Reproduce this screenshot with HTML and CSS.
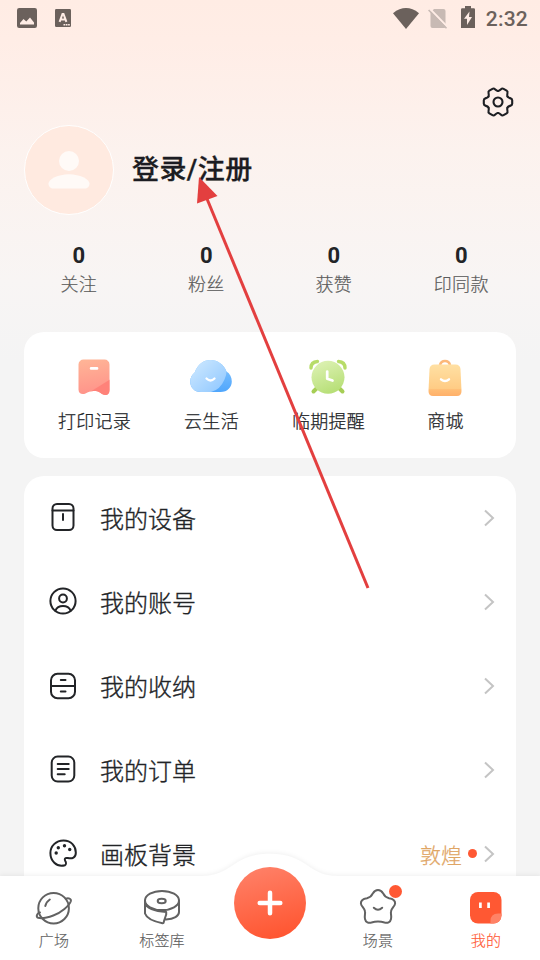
FILE: index.html
```html
<!DOCTYPE html>
<html lang="zh-CN">
<head>
<meta charset="utf-8">
<title>我的</title>
<link rel="stylesheet" href="styles.css">
</head>
<body>
<div class="screen">
  <header class="status">
    <svg class="s-photo" width="20" height="20" viewBox="0 0 20 20"><rect width="20" height="20" rx="2.2" fill="#6b615c"/><path d="M3 16.5V15l3.5-4 2.8 2.6L13 9.5l4 5v2z" fill="#ffede6"/></svg>
    <svg class="s-lang" width="16" height="18" viewBox="0 0 16 18"><rect width="16" height="18" rx="1.2" fill="#6b615c"/><path d="M4.600 12.800 7.500 5h1l2.900 7.800M5.800 10.500h4.400" fill="none" stroke="#ffede6" stroke-width="2"/><path d="M8.500 15.800h1.700m.6 0h1.700m.6 0h1.700" stroke="#ffede6" stroke-width="1.500"/></svg>
    <span class="grow"></span>
    <svg class="s-wifi" width="26" height="21" viewBox="0 0 26 21"><path d="M0 5.2Q13-5 26 5.2L13 21z" fill="#6b615c"/></svg>
    <svg class="s-sim" width="20" height="21" viewBox="0 0 20 21"><path d="M2.500 4.500 6 1h9.500a2 2 0 0 1 2 2v15.500a1.500 1.500 0 0 1-1.500 1.500H4.500a2 2 0 0 1-2-2z" fill="#c8bab4"/><path d="M2 1 19.500 19" stroke="#ffede6" stroke-width="2"/><path d="M.6 2 18.500 20.300" stroke="#c8bab4" stroke-width="1.600"/></svg>
    <svg class="s-batt" width="14" height="22" viewBox="0 0 14 22"><path d="M0 3.500Q0 2.200 1.200 2.200H4V0h6v2.200h2.800Q14 2.200 14 3.500V22H0z" fill="#6b615c"/><path d="M8.500 5.500 3 12.800h3v6.200l5-8H8z" fill="#ffede6"/></svg>
    <span class="clock">2:32</span>
  </header>

  <div class="tools">
    <svg width="32" height="32" viewBox="-16 -16 32 32" fill="none" stroke="#1d1f23" stroke-width="2.100" stroke-linecap="round">
      <defs><path id="tooth" d="M9.530-5.500C10.900-3.100 14.200-4.600 14.200-1.800V1.800C14.200 4.600 10.900 3.100 9.530 5.500"/></defs>
      <use href="#tooth"/><use href="#tooth" transform="rotate(60)"/><use href="#tooth" transform="rotate(120)"/><use href="#tooth" transform="rotate(180)"/><use href="#tooth" transform="rotate(240)"/><use href="#tooth" transform="rotate(300)"/>
      <circle r="4.500"/>
    </svg>
  </div>

  <section class="profile">
    <div class="avatar">
      <svg width="42" height="38" viewBox="0 0 42 38" fill="#fffaf7"><circle cx="21" cy="10" r="10"/><path d="M.5 32.500C.5 28.500 10 23.300 21 23.300s20.500 5.200 20.500 9.200c0 3.500-2 5-5 5h-31c-3 0-5-1.500-5-5z"/></svg>
    </div>
    <h1>登录/注册</h1>
  </section>

  <section class="stats">
    <div class="stat"><b>0</b><span>关注</span></div>
    <div class="stat"><b>0</b><span>粉丝</span></div>
    <div class="stat"><b>0</b><span>获赞</span></div>
    <div class="stat"><b>0</b><span>印同款</span></div>
  </section>

  <section class="card shortcuts">
    <div class="shortcut">
      <svg width="44" height="40" viewBox="0 0 44 40">
        <defs><linearGradient id="red" x2=".2" y2="1"><stop stop-color="#ffb898"/><stop offset="1" stop-color="#ff9189"/></linearGradient>
        <clipPath id="ticket"><path d="M6.500 6.500a5 5 0 0 1 5-5h21a5 5 0 0 1 5 5V32C37.500 37 34 38 30 36 27 33.500 25 33 21.700 33S16 34 13.500 35.500C10 37 6.500 35.500 6.500 31.500z"/></clipPath></defs>
        <g clip-path="url(#ticket)"><path d="M0 0h44v40H0z" fill="url(#red)"/><path d="M18 34 38 21.500v16H18z" fill="#ff8279"/></g>
        <rect x="17.800" y="9" width="8.500" height="2.700" rx="1.200" fill="#fff"/>
      </svg>
      <span>打印记录</span>
    </div>
    <div class="shortcut">
      <svg width="44" height="40" viewBox="0 0 44 40">
        <defs><linearGradient id="sky" x2="1" y2="1"><stop stop-color="#d4ecff"/><stop offset="1" stop-color="#8dc6ff"/></linearGradient>
        <linearGradient id="blue" x2="0" y2="1"><stop stop-color="#8bc9ff"/><stop offset="1" stop-color="#45a0fc"/></linearGradient>
        <clipPath id="cloud"><path d="M12 34C5 34 1.200 29 1.200 23.500c0-4 2-7 4.500-9C8.500 6.500 14.500 2 21.500 2S35 6.500 37.500 13.500c3.500 2 5.300 6 5.300 10C42.800 29 38.500 34 31.500 34z"/></clipPath></defs>
        <g clip-path="url(#cloud)"><path d="M0 0h44v40H0z" fill="url(#blue)"/><path d="M0 0h36q3.500 14-.5 21.500Q31 32 22 34H0z" fill="url(#sky)"/></g>
        <path d="M17.500 20.500q4 4 8 0" fill="none" stroke="#fff" stroke-width="2.300" stroke-linecap="round"/>
      </svg>
      <span>云生活</span>
    </div>
    <div class="shortcut">
      <svg width="44" height="40" viewBox="0 0 44 40">
        <defs><linearGradient id="lime" x1=".3" x2=".7" y2="1"><stop stop-color="#dcf1b2"/><stop offset="1" stop-color="#b5de74"/></linearGradient></defs>
        <path d="M5 10q0-6 6.500-6.500M39 10q0-6-6.500-6.500" fill="none" stroke="#b7dc68" stroke-width="3.400" stroke-linecap="round"/>
        <path d="m11 30-3.500 3.500M33 30l3.500 3.500" stroke="#a6ce55" stroke-width="4" stroke-linecap="round"/>
        <circle cx="22" cy="19.300" r="16.500" fill="url(#lime)"/>
        <path d="M21.200 13.500v7.200l5.300 1.800" fill="none" stroke="#fff" stroke-width="2.700" stroke-linecap="round" stroke-linejoin="round"/>
      </svg>
      <span>临期提醒</span>
    </div>
    <div class="shortcut">
      <svg width="44" height="40" viewBox="0 0 44 40">
        <defs><linearGradient id="gold" x2="0" y2="1"><stop stop-color="#ffe0a3"/><stop offset=".76" stop-color="#ffcc85"/><stop offset=".8" stop-color="#ffbd75"/><stop offset="1" stop-color="#ffb06a"/></linearGradient></defs>
        <path d="M17 7q1-4 5-4t5 4" fill="none" stroke="#fcb879" stroke-width="2.600"/>
        <path d="M11.500 6.500h21q4.500 0 5 4.500l1 22q0 5-4.500 5H10q-4.500 0-4.500-5l1-22q.5-4.500 5-4.500z" fill="url(#gold)"/>
        <path d="M18 21.300q4 3.600 8 0" fill="none" stroke="#fff" stroke-width="2.400" stroke-linecap="round"/>
      </svg>
      <span>商城</span>
    </div>
  </section>

  <section class="card menu">
    <div class="row">
      <svg class="icon" viewBox="0 0 28 28"><rect x="3.500" y="1" width="21" height="26" rx="4.500"/><path d="M3.500 7.500h21M14 11v6"/></svg>
      <span class="name">我的设备</span><svg class="chev" viewBox="0 0 12 18"><path d="m2 1.500 8 7.500-8 7.500"/></svg>
    </div>
    <div class="row">
      <svg class="icon" viewBox="0 0 28 28"><circle cx="14" cy="14" r="12.600"/><circle cx="14" cy="11.500" r="3.900"/><path d="M6.300 23.800q2-4.800 7.700-4.800t7.700 4.800"/></svg>
      <span class="name">我的账号</span><svg class="chev" viewBox="0 0 12 18"><path d="m2 1.500 8 7.500-8 7.500"/></svg>
    </div>
    <div class="row">
      <svg class="icon down" viewBox="0 0 28 28"><rect x="2" y="1.800" width="24" height="24.400" rx="6.500"/><path d="M2 14h24M11.800 8h4.700m-4.700 11.500h4.700"/></svg>
      <span class="name">我的收纳</span><svg class="chev" viewBox="0 0 12 18"><path d="m2 1.500 8 7.500-8 7.500"/></svg>
    </div>
    <div class="row">
      <svg class="icon" viewBox="0 0 28 28"><rect x="2.700" y="1.600" width="22.600" height="25" rx="6"/><path d="M8.700 9h11M8.700 14h11M8.700 19.200h7"/></svg>
      <span class="name">我的订单</span><svg class="chev" viewBox="0 0 12 18"><path d="m2 1.500 8 7.500-8 7.500"/></svg>
    </div>
    <div class="row">
      <svg class="icon" viewBox="0 0 28 28"><path d="M16 26.200C7 28.500 1.400 21.500 1.400 14 1.400 7 7 1.500 14.500 1.500S27 7 26.800 14c0 4.500-3.500 6-8 5-3-.5-3.500 1-2.500 3 1 1.600.8 3.500-.3 4.200z"/><g fill="#222427" stroke="none"><circle cx="7.200" cy="14" r="1.700"/><circle cx="9.300" cy="8.700" r="1.700"/><circle cx="15.500" cy="6.800" r="1.700"/><circle cx="20.700" cy="10.500" r="1.700"/></g></svg>
      <span class="name">画板背景</span><span class="value">敦煌</span><i class="dot"></i><svg class="chev" viewBox="0 0 12 18"><path d="m2 1.500 8 7.500-8 7.500"/></svg>
    </div>
  </section>

  <nav class="tabbar">
    <svg class="tabbg" width="540" height="112" viewBox="0 0 540 112"><path d="M-10 28H202C233 28 232 5.800 270 5.800S307 28 338 28H550V130H-10z" fill="#fff"/></svg>
    <div class="tab">
      <svg width="40" height="38" viewBox="0 0 40 38"><circle cx="19.600" cy="20.200" r="15.300"/><path d="M31.700 10.700C34.500 9.800 37.500 10.500 36.800 13.300 35.500 17.500 27 25 19.300 27.500 13 29.800 7 30.600 4.200 29.800 2 29 2.300 25.500 6 24.400M11.300 18q1-4.200 4.500-6.500"/></svg>
      <span>广场</span>
    </div>
    <div class="tab">
      <svg width="40" height="38" viewBox="0 0 40 38"><ellipse cx="20" cy="12.500" rx="17" ry="9.600"/><ellipse cx="19.700" cy="13" rx="4" ry="2.300"/><path d="M3 12.500v13c1.500 4.500 9 8 17.500 9.700 1.500.2 1.200-1 1.500-2.200l2.200-6.500V24C14 23.500 5 20.500 3 15M37 12.500v11.500c0 4-5 7-13 7.500"/></svg>
      <span>标签库</span>
    </div>
    <div class="tab middle">
      <div class="add"><svg width="26" height="26" viewBox="0 0 26 26"><path d="M13 2.700v20.600M2.700 13h20.600"/></svg></div>
    </div>
    <div class="tab">
      <svg width="40" height="38" viewBox="0 0 40 38"><path d="M20 2C22.500 2 24 3.500 25 5.200 26.500 8.400 28 9.500 31 10.200 35 10.800 37.300 12.500 37.100 15.500 36.800 18.500 33.500 20 33 23.500 32.500 26 33.800 28 33 31 32.300 34.500 29.500 35.200 26.500 34.500 22 33 18 33 13.500 34.500 10.500 35.200 7.700 34.500 7 31 6.200 28 7.500 26 7 23.500 6.500 20 3.200 18.500 2.900 15.500 2.700 12.500 5 10.800 9 10.200 12 9.500 13.500 8.400 15 5.200 16 3.500 17.500 2 20 2z"/><path d="M15.800 19.700q4.200 4 8.400 0"/></svg>
      <i class="badge"></i>
      <span>场景</span>
    </div>
    <div class="tab active">
      <svg width="40" height="38" viewBox="0 0 40 38"><defs><clipPath id="face"><rect x="4" y="4" width="31.500" height="31.500" rx="8"/></clipPath></defs><g stroke="none" clip-path="url(#face)"><path d="M0 0h40v38H0z" fill="#ff5833"/><path d="M24.500 37v-4q0-7.500 7.500-7.500h5V37z" fill="#ff8266"/></g><path d="M14.400 14.500v5.500m8.200-5.500v5.500" stroke="#fff" stroke-width="2.700" stroke-linecap="butt"/></svg>
      <span>我的</span>
    </div>
  </nav>

  <svg class="pointer" width="540" height="960" viewBox="0 0 540 960"><path d="M205 194 368 588" stroke="#e33f3f" stroke-width="3"/><path d="m199 177 18.500 19L197 203.500z" fill="#e33f3f"/></svg>
</div>
</body>
</html>
```
FILE: styles.css
```css
* { box-sizing: border-box; }

body {
  margin: 0;
  font-family: "Noto Sans CJK SC", sans-serif;
  color: #222427;
}

.screen {
  position: relative;
  display: flex;
  flex-direction: column;
  width: 540px;
  height: 960px;
  overflow: hidden;
  background: linear-gradient(#ffece4 0, #ffede6 40px, #fcf2ee 150px, #f8f5f4 280px, #f4f4f4 360px);
}

svg { display: block; flex: none; }

.status {
  display: flex;
  align-items: center;
  height: 36px;
  flex: none;
  padding: 0 12px 0 17px;
}
.s-lang { margin-left: 18px; }
.grow { flex: 1; }
.s-wifi { margin-right: 9px; }
.s-sim { margin-right: 13px; }
.s-batt { margin: 0 11px 2px 0; }
.clock {
  font: 500 21px/36px Roboto, sans-serif;
  letter-spacing: .2px;
  padding-top: 2px;
  color: #6b615c;
}

.tools {
  display: flex;
  justify-content: flex-end;
  height: 88px;
  flex: none;
  padding: 50px 26px 0;
}

.profile {
  display: flex;
  align-items: center;
  gap: 18px;
  height: 91px;
  flex: none;
  padding-left: 24px;
}
.avatar {
  display: flex;
  align-items: center;
  justify-content: center;
  width: 90px;
  height: 90px;
  border: 1.5px solid #fff;
  border-radius: 50%;
  background: #ffeae0;
}
h1 {
  margin: 0;
  font-family: Roboto, "Noto Sans CJK SC", sans-serif;
  font-size: 27px;
  font-weight: 500;
  line-height: 40px;
  letter-spacing: .4px;
  color: #1c1c22;
  -webkit-text-stroke: .3px #1c1c22;
}

.stats {
  display: grid;
  grid-template-columns: repeat(4, 1fr);
  height: 117px;
  flex: none;
  padding: 27px 15px 0;
}
.stat {
  display: flex;
  flex-direction: column;
  align-items: center;
}
.stat b { font: 700 22px/28px Roboto, sans-serif; }
.stat span {
  margin-top: -1px;
  font-size: 18px;
  font-weight: 300;
  line-height: 28px;
  letter-spacing: .3px;
  color: #5c5c5c;
  -webkit-text-stroke: .2px #5c5c5c;
}

.card {
  flex: none;
  margin: 0 24px;
  border-radius: 20px;
  background: #fff;
}

.shortcuts {
  display: grid;
  grid-template-columns: repeat(4, 117px);
  justify-content: center;
  height: 125.5px;
  padding-top: 26px;
}
.shortcut {
  display: flex;
  flex-direction: column;
  align-items: center;
  gap: 8px;
}
.shortcut svg { margin-left: -1px; }
.shortcut span {
  font-size: 18px;
  font-weight: 300;
  line-height: 28px;
  letter-spacing: .3px;
  -webkit-text-stroke: .25px #222427;
}

.menu { margin-top: 18px; }
.row {
  display: flex;
  align-items: center;
  height: 84px;
  padding: 0 21px 0 25px;
}
.icon {
  width: 28px;
  height: 28px;
  margin: -2px 23px 0 0;
  fill: none;
  stroke: #222427;
  stroke-width: 2;
  stroke-linecap: round;
}
.icon.down { margin-top: 0; }
.name {
  flex: 1;
  font-size: 24px;
  font-weight: 300;
  line-height: 36px;
  -webkit-text-stroke: .35px #222427;
}
.value {
  font-size: 21px;
  font-weight: 300;
  color: #dfa564;
  -webkit-text-stroke: .25px #dfa564;
}
.dot {
  width: 9px;
  height: 9px;
  margin: 0 6px 0 6px;
  border-radius: 50%;
  background: #ff5833;
}
.chev {
  width: 12px;
  height: 18px;
  fill: none;
  stroke: #c4c4c4;
  stroke-width: 2;
}

.tabbar {
  position: absolute;
  left: 0;
  bottom: 0;
  display: grid;
  grid-template-columns: repeat(5, 108px);
  width: 540px;
  height: 84px;
}
.tabbg {
  position: absolute;
  left: 0;
  bottom: 0;
  filter: drop-shadow(0 -1px 2px rgba(0, 0, 0, .06));
}
.tab {
  position: relative;
  display: flex;
  flex-direction: column;
  align-items: center;
  padding-top: 12px;
  fill: none;
  stroke: #626262;
  stroke-width: 2;
  stroke-linecap: round;
  stroke-linejoin: round;
}
.tab span {
  margin-top: 2px;
  font-size: 15px;
  font-weight: 300;
  line-height: 24px;
  letter-spacing: .2px;
  color: #606060;
  -webkit-text-stroke: .15px currentColor;
}
.tab.active span { color: #ff5833; }
.tab.middle { padding: 0; }
.add {
  display: flex;
  align-items: center;
  justify-content: center;
  flex: none;
  width: 72px;
  height: 72px;
  margin-top: -9px;
  border-radius: 50%;
  background: linear-gradient(165deg, #ff7f66 8%, #ff5530 92%);
  stroke: #fff;
  stroke-width: 4.5;
}
.badge {
  position: absolute;
  top: 9px;
  left: 65px;
  width: 13px;
  height: 13px;
  border-radius: 50%;
  background: #ff5833;
}

.pointer {
  position: absolute;
  left: 0;
  top: 0;
  pointer-events: none;
}
```
